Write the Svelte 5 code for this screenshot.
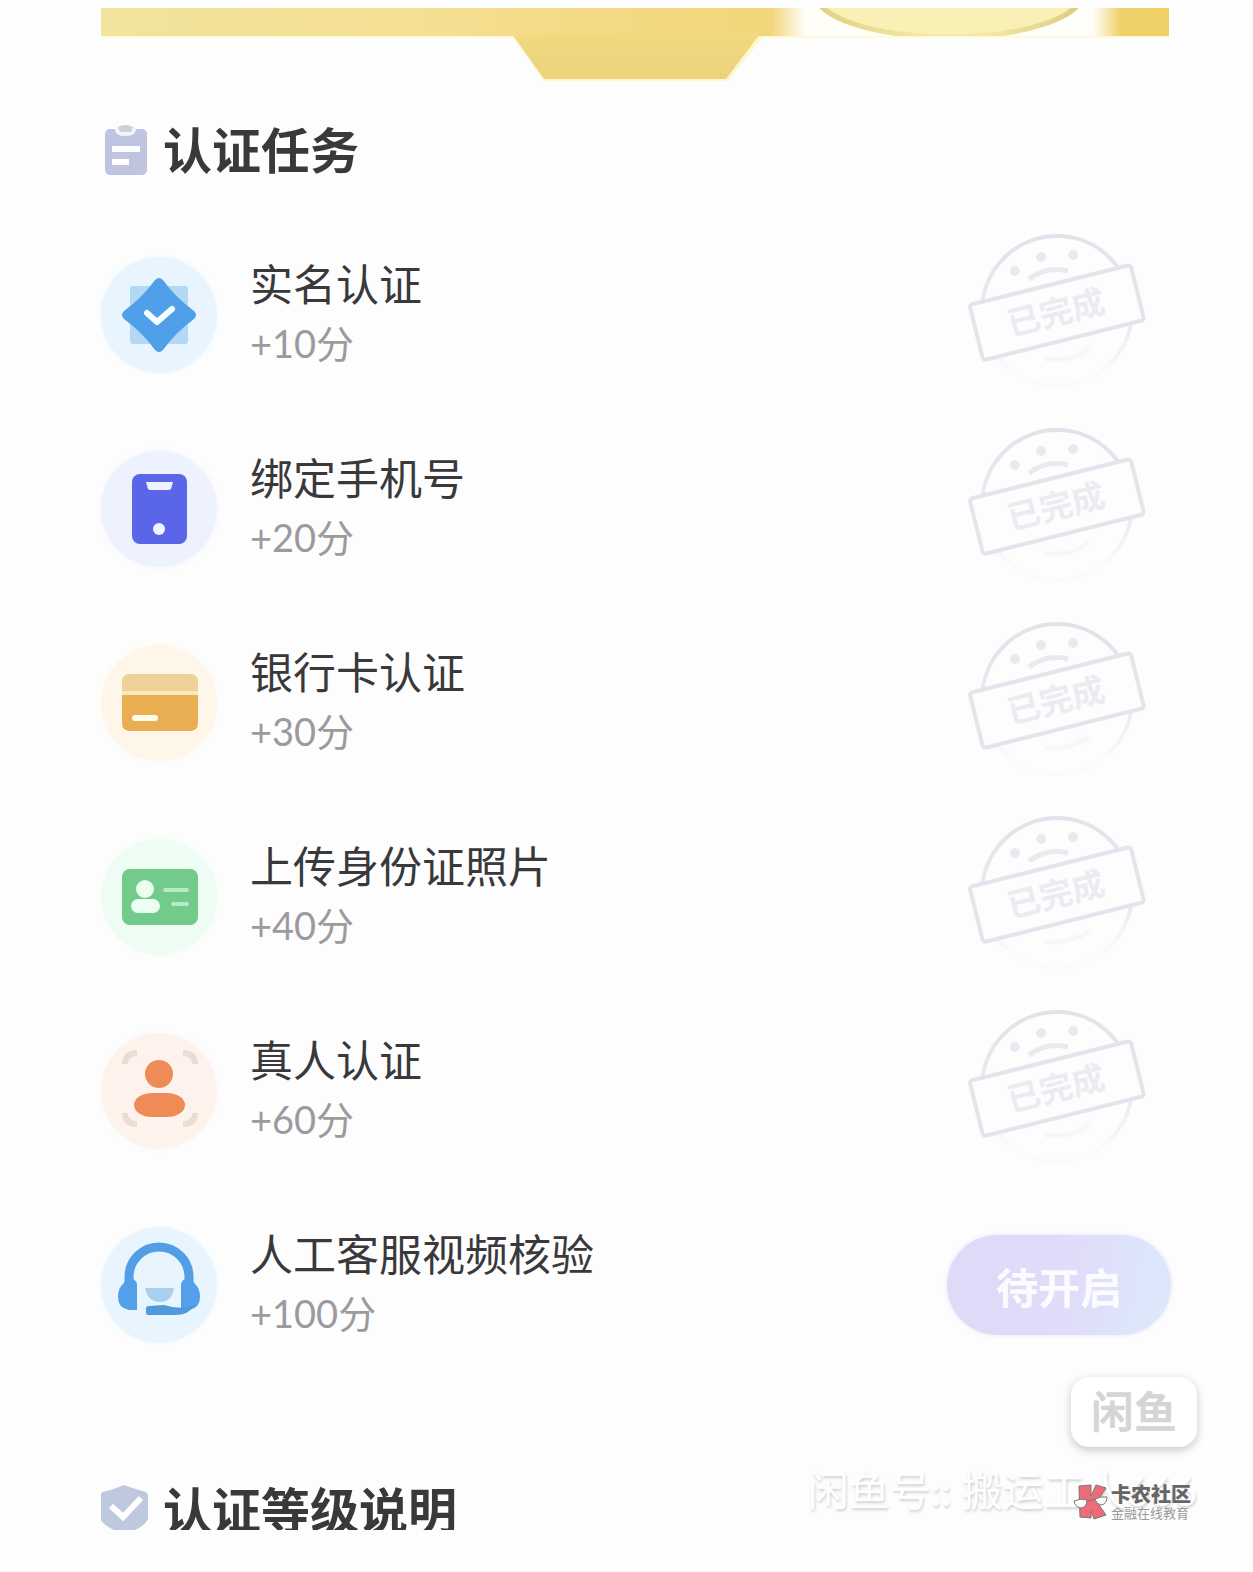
<script>
  const tasks = [
    { icon: "badge", title: "实名认证", points: 10, done: true },
    { icon: "phone", title: "绑定手机号", points: 20, done: true },
    { icon: "bank", title: "银行卡认证", points: 30, done: true },
    { icon: "idcard", title: "上传身份证照片", points: 40, done: true },
    { icon: "face", title: "真人认证", points: 60, done: true },
    { icon: "service", title: "人工客服视频核验", points: 100, done: false },
  ];
</script>

<main class="page">
  <div class="card">
    <svg class="banner" viewBox="0 0 1070 74" aria-hidden="true">
      <defs>
        <linearGradient id="gold" x1="0" x2="1">
          <stop offset="0" stop-color="#f1e49c" />
          <stop offset="0.3" stop-color="#f5df92" />
          <stop offset="0.6" stop-color="#f3d67c" />
          <stop offset="1" stop-color="#eed067" />
        </linearGradient>
        <linearGradient id="tab" x1="0" y1="0" x2="0" y2="1">
          <stop offset="0" stop-color="#f3d97f" />
          <stop offset="0.5" stop-color="#edd67f" />
          <stop offset="1" stop-color="#eed27a" />
        </linearGradient>
        <linearGradient id="glow" x1="0" x2="1">
          <stop offset="0" stop-color="#fffef8" stop-opacity="0" />
          <stop offset="0.1" stop-color="#fffef8" />
          <stop offset="0.92" stop-color="#fffef8" />
          <stop offset="1" stop-color="#fffef8" stop-opacity="0" />
        </linearGradient>
        <linearGradient id="rim" x1="0" x2="1">
          <stop offset="0" stop-color="#e0cf82" />
          <stop offset="0.4" stop-color="#f3e8a6" />
          <stop offset="0.65" stop-color="#f3e8a6" />
          <stop offset="1" stop-color="#dccb7e" />
        </linearGradient>
        <clipPath id="strip"><rect width="1068" height="28" /></clipPath>
      </defs>
      <rect width="1068" height="30" fill="#fffbd9" />
      <path d="M410 27H664L627 73H443Z" fill="#fff7cf" />
      <rect width="1068" height="28" fill="url(#gold)" />
      <path d="M411 26L443 71H625L659 26Z" fill="url(#tab)" />
      <g clip-path="url(#strip)">
        <rect x="670" width="350" height="28" fill="url(#glow)" />
        <ellipse cx="848" cy="-14" rx="133" ry="43" fill="#f8f0b4" stroke="url(#rim)" stroke-width="5" />
      </g>
    </svg>

    <h2>
      <svg class="head-icon" viewBox="0 0 48 52" aria-hidden="true">
        <rect x="4" y="5" width="42" height="46" rx="5" fill="#bfc5e0" />
        <path d="M14 3H35V6Q34 12 24 12Q15 12 14 6Z" fill="#f4f5f7" />
        <path d="M17 3Q24 -1 32 3L30 8H19Z" fill="#cdd0d6" />
        <rect x="11" y="22" width="28" height="6" fill="#fff" />
        <rect x="11" y="35" width="17" height="6" fill="#fff" />
      </svg>
      <span>认证任务</span>
    </h2>

    <ul>
      {#each tasks as task}
        <li>
          <span class="icon {task.icon}">
            <svg viewBox="0 0 116 116" aria-hidden="true">
              {#if task.icon === "badge"}
                <rect x="29" y="29" width="58" height="58" rx="3" fill="#b3d8f5" />
                <path d="M54 23Q58 19 62 23Q74 40 93 54Q97 58 93 62Q74 76 62 93Q58 97 54 93Q42 76 23 62Q19 58 23 54Q42 40 54 23Z" fill="#4f9fe9" />
                <path d="M46 56L56 65L71 52" fill="none" stroke="#f4ffff" stroke-width="6" stroke-linecap="round" stroke-linejoin="round" />
              {:else if task.icon === "phone"}
                <rect x="31" y="23" width="55" height="70" rx="8" fill="#5b65e7" />
                <path d="M45 31H72L70 38Q69 39 67 39H50Q48 39 47 38Z" fill="#eef2ff" />
                <circle cx="58" cy="78" r="6" fill="#eff6ff" />
              {:else if task.icon === "bank"}
                <path d="M21 46V37Q21 29 29 29H89Q97 29 97 37V46Z" fill="#edd39a" />
                <path d="M21 46H97V51H21Z" fill="#fbe6bd" />
                <path d="M21 50H97V78Q97 86 89 86H29Q21 86 21 78Z" fill="#e8ae51" />
                <path d="M34 73H54" stroke="#fffbea" stroke-width="6" stroke-linecap="round" />
              {:else if task.icon === "idcard"}
                <rect x="21" y="30" width="76" height="56" rx="8" fill="#72ca8b" />
                <circle cx="44" cy="50" r="9" fill="#eafff0" />
                <rect x="30" y="60" width="29" height="14" rx="7" fill="#eafff0" />
                <path d="M64 51H86M72 65H86" stroke="#b5ebc2" stroke-width="4" stroke-linecap="round" />
              {:else if task.icon === "face"}
                <circle cx="58" cy="41" r="14" fill="#ef8b57" />
                <rect x="33" y="60" width="51" height="24" rx="18" ry="12" fill="#ef8b57" />
                <path d="M24 31Q24 20 36 20M82 20Q94 20 94 31M94 80Q94 91 82 91M36 91Q24 91 24 80" fill="none" stroke="#ecdcd3" stroke-width="6" />
              {:else}
                <path d="M28 58V50A30 30 0 0 1 88 50V58" fill="none" stroke="#519ee5" stroke-width="9" />
                <path d="M26 51Q35 51 36 57V83H28Q17 81 17 70Q17 61 22 57ZM90 51Q81 51 80 57V83H88Q99 81 99 70Q99 61 94 57Z" fill="#539fe9" />
                <path d="M94 78Q88 88 74 88H47Q45 88 45 85V81Q45 79 48 79L63 78Q72 81 82 81Z" fill="#4e9bdc" />
                <path d="M44 61H73Q71 75 59 75Q47 75 44 61Z" fill="#a9cfee" />
              {/if}
            </svg>
          </span>
          <div class="text">
            <h3>{task.title}</h3>
            <p>+{task.points}分</p>
          </div>
          {#if task.done}
            <svg class="stamp" viewBox="0 0 180 156" role="img" aria-label="已完成">
              <defs>
                <linearGradient id="fade" x1="0" y1="0" x2="0" y2="1">
                  <stop offset="0" stop-color="#e3e2ea" />
                  <stop offset="0.6" stop-color="#eceaf2" />
                  <stop offset="0.9" stop-color="#fafbfc" />
                </linearGradient>
              </defs>
              <circle cx="90" cy="74" r="75" fill="none" stroke="url(#fade)" stroke-width="4" />
              <g fill="#eae8f0">
                <circle cx="48" cy="34" r="5" />
                <circle cx="74" cy="20" r="5" />
                <circle cx="106" cy="18" r="5" />
              </g>
              <path d="M62 42Q80 29 101 34" fill="none" stroke="#ebe9f0" stroke-width="5" />
              <path d="M78 122Q102 126 122 112" fill="none" stroke="#f7f6fa" stroke-width="5" />
              <g transform="rotate(-14 90 76)">
                <rect x="7" y="47" width="166" height="57" rx="3" fill="#fdfdfe" stroke="#e5e4ec" stroke-width="4" />
                <text x="89" y="87" text-anchor="middle">已完成</text>
              </g>
            </svg>
          {:else}
            <button type="button">待开启</button>
          {/if}
        </li>
      {/each}
    </ul>

    <h2 class="cut">
      <svg class="head-icon" viewBox="0 0 48 52" aria-hidden="true">
        <path d="M23 1Q34 5 45 8Q47 9 47 13V35Q41 46 24 49Q6 46 -1 35V13Q-1 9 2 8Q14 5 23 1Z" fill="#bec8de" />
        <path d="M10 22L22 33L40 14" fill="none" stroke="#fff" stroke-width="6" />
      </svg>
      <span>认证等级说明</span>
    </h2>
  </div>

  <div class="marks">
    <div class="xianyu">闲鱼</div>
    <div class="seller">闲鱼号:: 搬运工人666</div>
    <div class="community">
      <svg viewBox="0 0 36 36" aria-hidden="true">
        <path d="M6 2L18 1V12L23 1L33 4L24 18L33 31L21 35L18 27V34L7 33Z" fill="#ee6c78" stroke="#777" stroke-width="1" />
        <g fill="#fff" stroke="#777" stroke-width="1">
          <path d="M1 17Q7 14 14 16Q14 23 8 24Q2 23 1 17Z" />
          <path d="M22 15Q28 12 34 13Q34 20 28 21Q23 20 22 15Z" />
          <path d="M14 17L22 15" />
        </g>
      </svg>
      <div>
        <strong>卡农社区</strong>
        <small>金融在线教育</small>
      </div>
    </div>
  </div>
</main>

<style>
  :global(body) {
    margin: 0;
    background: #fefefe;
  }

  .page {
    position: relative;
    font-family: Lato, "Noto Sans CJK SC", sans-serif;
    color: #39383b;
  }

  .card {
    margin: 0 68px 0 65px;
    padding: 8px 14px 5px 36px;
    background: #fdfdfe;
  }

  .banner {
    display: block;
    width: 100%;
  }

  h2 {
    display: flex;
    align-items: flex-start;
    gap: 14px;
    height: 56px;
    margin: 42px 0 38px;
    font-family: "Noto Sans CJK SC", sans-serif;
    font-size: 49px;
    font-weight: 700;
    line-height: 48px;
  }

  .head-icon {
    width: 48px;
    height: 52px;
    overflow: visible;
  }

  .cut {
    height: 46px;
    margin: 102px 0 0;
    overflow: hidden;
  }

  ul {
    margin: 0;
    padding: 0;
    list-style: none;
  }

  li {
    display: flex;
    align-items: center;
    height: 194px;
  }

  .icon {
    flex: none;
    width: 116px;
    height: 116px;
    border-radius: 50%;
  }

  .icon svg {
    display: block;
  }

  .badge {
    background: #e8f4fe;
    box-shadow: 0 0 6px #effaff;
  }

  .phone {
    background: #eef1fe;
    box-shadow: 0 0 6px #f5f5ff;
  }

  .bank {
    background: #fdf6e9;
    box-shadow: 0 0 6px #fffaf0;
  }

  .idcard {
    background: #eefcf3;
    box-shadow: 0 0 6px #f5fff8;
  }

  .face {
    background: #fdf3ec;
    box-shadow: 0 0 6px #fff8f4;
  }

  .service {
    background: #e9f5fe;
    box-shadow: 0 0 6px #f2fbff;
  }

  .text {
    flex: 1;
    margin-left: 33px;
    padding-bottom: 4px;
  }

  h3,
  p {
    margin: 0;
    font-weight: 400;
  }

  h3 {
    font-family: "Noto Sans CJK SC", sans-serif;
    font-size: 43px;
    line-height: 60px;
  }

  p {
    font-size: 38px;
    line-height: 62px;
    color: #9b9a9e;
  }

  .stamp {
    flex: none;
    width: 180px;
    height: 156px;
    margin-right: 24px;
    overflow: visible;
  }

  .stamp text {
    font-family: "Noto Sans CJK SC", sans-serif;
    font-size: 33px;
    font-weight: 700;
    fill: #ecebf2;
  }

  button {
    width: 224px;
    height: 100px;
    padding: 0;
    border: 0;
    border-radius: 50px;
    background: linear-gradient(100deg, #e0d9f8 10%, #e0dcf9 55%, #dde6fa 85%);
    box-shadow: 0 0 4px #e6e2f6;
    color: #fcfbff;
    font-family: "Noto Sans CJK SC", sans-serif;
    font-size: 42px;
    font-weight: 700;
  }

  .marks {
    position: absolute;
    right: 56px;
    bottom: 14px;
    display: flex;
    flex-direction: column;
    align-items: flex-end;
  }

  .xianyu {
    width: 126px;
    height: 70px;
    border-radius: 18px;
    background: #fff;
    box-shadow: 0 3px 10px rgba(0, 0, 0, 0.22);
    color: #d5d5d5;
    font-size: 43px;
    font-weight: 700;
    line-height: 70px;
    text-align: center;
  }

  .seller {
    margin-top: 14px;
    color: #fff;
    font-size: 41px;
    line-height: 60px;
    text-shadow: 1px 2px 3px rgba(0, 0, 0, 0.18);
    white-space: nowrap;
  }

  .community {
    position: absolute;
    right: 6px;
    bottom: 0;
    display: flex;
    align-items: center;
    gap: 2px;
  }

  .community svg {
    width: 36px;
    height: 36px;
  }

  strong,
  small {
    display: block;
    white-space: nowrap;
  }

  strong {
    color: #666;
    font-size: 20px;
    font-weight: 900;
    line-height: 22px;
  }

  small {
    color: #999;
    font-size: 13px;
    line-height: 16px;
  }
</style>
